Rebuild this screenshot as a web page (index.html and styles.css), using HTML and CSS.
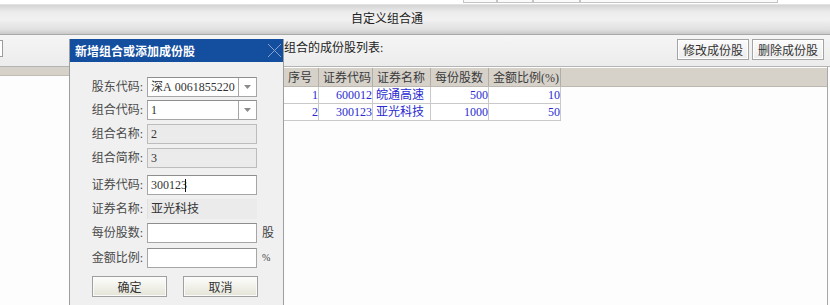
FILE: index.html
```html
<!DOCTYPE html>
<html lang="zh">
<head>
<meta charset="utf-8">
<title>自定义组合通</title>
<link rel="stylesheet" href="styles.css">
</head>
<body>
<div class="screen">
  <div class="topstrip">
    <span class="tbox w1"></span><span class="tbox w2"></span><span class="tbox w3"></span><span class="tbox w4"></span>
  </div>
  <div class="titlebar">自定义组合通</div>
  <div class="toolbar">
    <div class="stub"></div>
    <div class="listlabel">组合的成份股列表:</div>
    <div class="tbtns">
      <button class="tbtn">修改成份股</button>
      <button class="tbtn">删除成份股</button>
    </div>
  </div>
  <div class="main">
    <div class="leftpane"><div class="lhead"></div></div>
    <div class="rightpane">
      <table class="grid">
        <colgroup><col class="c1"><col class="c2"><col class="c3"><col class="c4"><col class="c5"><col></colgroup>
        <thead>
          <tr><th>序号</th><th>证券代码</th><th>证券名称</th><th>每份股数</th><th>金额比例(%)</th><th class="fill"></th></tr>
        </thead>
        <tbody>
          <tr><td class="num">1</td><td class="num">600012</td><td>皖通高速</td><td class="num">500</td><td class="num">10</td><td class="fill"></td></tr>
          <tr><td class="num">2</td><td class="num">300123</td><td>亚光科技</td><td class="num">1000</td><td class="num">50</td><td class="fill"></td></tr>
        </tbody>
      </table>
    </div>
  </div>

  <div class="dialog">
    <div class="dlg-title">
      <span>新增组合或添加成份股</span>
      <svg class="dlg-close" width="15" height="15" viewBox="0 0 15 15"><path d="M1 1 L14 14 M14 1 L1 14" stroke="#8aa1cc" stroke-width="1" fill="none"/></svg>
    </div>
    <div class="dlg-body">
      <div class="form">
        <label class="lbl">股东代码:</label>
        <div class="field select"><span class="val"><span class="mkt">深A</span>0061855220</span><span class="drop"><svg width="7" height="4" viewBox="0 0 7 4"><path d="M0 0 H7 L3.5 4 Z" fill="#8a8a8a"/></svg></span></div>
        <span class="suffix"></span>

        <label class="lbl">组合代码:</label>
        <div class="field select"><span class="val">1</span><span class="drop"><svg width="7" height="4" viewBox="0 0 7 4"><path d="M0 0 H7 L3.5 4 Z" fill="#8a8a8a"/></svg></span></div>
        <span class="suffix"></span>

        <label class="lbl">组合名称:</label>
        <div class="field disabled"><span class="val">2</span></div>
        <span class="suffix"></span>

        <label class="lbl">组合简称:</label>
        <div class="field disabled"><span class="val">3</span></div>
        <span class="suffix"></span>

        <label class="lbl">证券代码:</label>
        <div class="field"><span class="val">300123</span><span class="caret"></span></div>
        <span class="suffix"></span>

        <label class="lbl">证券名称:</label>
        <div class="field plain"><span class="val">亚光科技</span></div>
        <span class="suffix"></span>

        <label class="lbl">每份股数:</label>
        <div class="field"></div>
        <span class="suffix">股</span>

        <label class="lbl">金额比例:</label>
        <div class="field"></div>
        <span class="suffix pct">%</span>
      </div>
      <div class="dlg-btns">
        <button class="dbtn">确定</button>
        <button class="dbtn">取消</button>
      </div>
    </div>
  </div>
</div>
</body>
</html>
```

FILE: styles.css
```css
* { box-sizing: border-box; }
html, body { margin: 0; padding: 0; }
body {
  width: 830px;
  height: 305px;
  overflow: hidden;
  background: #fff;
  font: 12px "Liberation Serif", "Noto Sans CJK SC", serif;
  color: #333;
}
.screen {
  position: relative;
  width: 830px;
  height: 305px;
  overflow: hidden;
  display: flex;
  flex-direction: column;
}

/* top cut-off strip */
.topstrip {
  height: 5px;
  flex: none;
  background: #fff;
  display: flex;
  padding-left: 463px;
  border-bottom: 1px solid #e2e2e2;
}
.tbox {
  height: 3px;
  border: 1px solid #c4c4c4;
  border-top: none;
  background: #fafafa;
}
.w1 { width: 34px; }
.w2 { width: 36px; }
.w3 { width: 47px; }
.w4 { width: 198px; }

/* title bar */
.titlebar {
  height: 30px;
  flex: none;
  line-height: 29px;
  text-align: center;
  padding-right: 56px;
  font-size: 12px;
  color: #222;
  background: linear-gradient(#d4d4d4 0%, #ececec 25%, #f1f1f1 50%, #e0e0e0 85%, #c9c9c9 100%);
  border-bottom: 1px solid #a9a9a9;
}

/* toolbar */
.toolbar {
  height: 32px;
  flex: none;
  display: flex;
  align-items: flex-start;
  background: linear-gradient(#f5f5f5, #ececec);
  border-bottom: 1px solid #b4b4b4;
}
.stub {
  width: 3px;
  height: 17px;
  margin-top: 5px;
  background: #fff;
  border: 1px solid #9c9c9c;
  border-left: none;
}
.listlabel {
  margin-left: 281px;
  margin-top: 6px;
  line-height: 14px;
  color: #222;
}
.tbtns {
  margin-left: auto;
  margin-right: 6px;
  margin-top: 4px;
  display: flex;
  gap: 3px;
}
.tbtn {
  height: 21px;
  padding: 0 5px;
  font: 12px "Liberation Serif", "Noto Sans CJK SC", serif;
  color: #333;
  background: linear-gradient(#fbfbfb, #ededed);
  border: 1px solid #a4a4a4;
  box-shadow: inset 0 0 0 1px #fff;
}

/* main area */
.main {
  flex: 1;
  display: flex;
  background: #fdfdfd;
}
.leftpane {
  width: 283px;
  flex: none;
  background: #fdfdfd;
}
.lhead {
  height: 9px;
  background: #d6d2ca;
  border-bottom: 1px solid #c2beb6;
}
.rightpane {
  flex: 1;
  margin-right: 2px;
  padding-top: 1px;
  border-right: 1px solid #a8a8a8;
  background: #fdfdfd;
}
.grid {
  width: 100%;
  table-layout: fixed;
  border-collapse: collapse;
}
.c1 { width: 35px; }
.c2 { width: 54px; }
.c3 { width: 58px; }
.c4 { width: 58px; }
.c5 { width: 72px; }
.grid th {
  height: 18px;
  padding: 0 4px;
  font-weight: normal;
  text-align: left;
  color: #3a3a3a;
  background: #d6d2ca;
  border-right: 1px solid #b2aea6;
  border-left: 1px solid #f2f0ec;
  border-bottom: 1px solid #bdb9b1;
  white-space: nowrap;
}
.grid th:first-child { border-left: 1px solid #a8a8a8; }
.grid th.fill { border-right: none; }
.grid td {
  height: 17px;
  padding: 0 2px 0 3px;
  color: #2a2ad2;
  border: 1px solid #c9c9c9;
  background: #fff;
  white-space: nowrap;
  line-height: 15px;
}
.grid td.num { text-align: right; padding-right: 0; }
.grid td.fill { border: none; background: transparent; }

/* dialog */
.dialog {
  position: absolute;
  left: 69px;
  top: 39px;
  width: 215px;
  height: 267px;
  background: #f0f0f0;
  border: 1px solid #9e9e9e;
  border-top: none;
}
.dlg-title {
  height: 23px;
  display: flex;
  align-items: center;
  justify-content: space-between;
  padding: 0 1px 0 5px;
  background: #134e9f;
  color: #fff;
  font: bold 12px "Noto Sans CJK SC", sans-serif;
}
.dlg-close { display: block; }
.dlg-body {
  padding-top: 15px;
}
.form {
  display: grid;
  grid-template-columns: 74px 110px 20px;
  grid-template-rows: 23px 24px 24px 27px 24px 24px 25px 20px;
  column-gap: 3px;
  align-items: start;
}
.lbl {
  height: 20px;
  line-height: 20px;
  text-align: right;
  color: #4a4a4a;
  padding-right: 1px;
  white-space: nowrap;
}
.field {
  height: 20px;
  display: flex;
  align-items: center;
  background: #fff;
  border: 1px solid #a6a6a6;
  border-top-color: #8e8e8e;
  color: #333;
  padding-left: 3px;
  position: relative;
}
.field .val { line-height: 18px; white-space: nowrap; flex: 1; overflow: hidden; }
.field .mkt { margin-right: 3px; }
.field.select { padding-right: 0; }
.field .drop {
  width: 18px;
  height: 18px;
  flex: none;
  display: flex;
  align-items: center;
  justify-content: center;
  border-left: 1px solid #a6a6a6;
  background: #fff;
}
.field.disabled { background: #ebebeb; border-color: #bcbcbc; }
.field.plain { background: #ebebeb; border: none; border-left: 1px solid #e0e0e0; }
.field .caret {
  position: absolute;
  left: 37px;
  top: 3px;
  width: 1px;
  height: 13px;
  background: #111;
}
.field:has(.caret) .val { flex: none; }
.suffix {
  line-height: 20px;
  padding-left: 2px;
  color: #444;
}
.suffix.pct { font-size: 10px; }
.dlg-btns {
  display: flex;
  gap: 16px;
  padding-left: 22px;
  margin-top: 8px;
}
.dbtn {
  width: 75px;
  height: 21px;
  font: 12px "Liberation Serif", "Noto Sans CJK SC", serif;
  color: #333;
  background: linear-gradient(#fdfdfd, #f1f1ea 50%, #e3e3d6);
  border: 1px solid #a0a0a0;
  box-shadow: inset 0 0 0 1px #fafafa;
}
```
